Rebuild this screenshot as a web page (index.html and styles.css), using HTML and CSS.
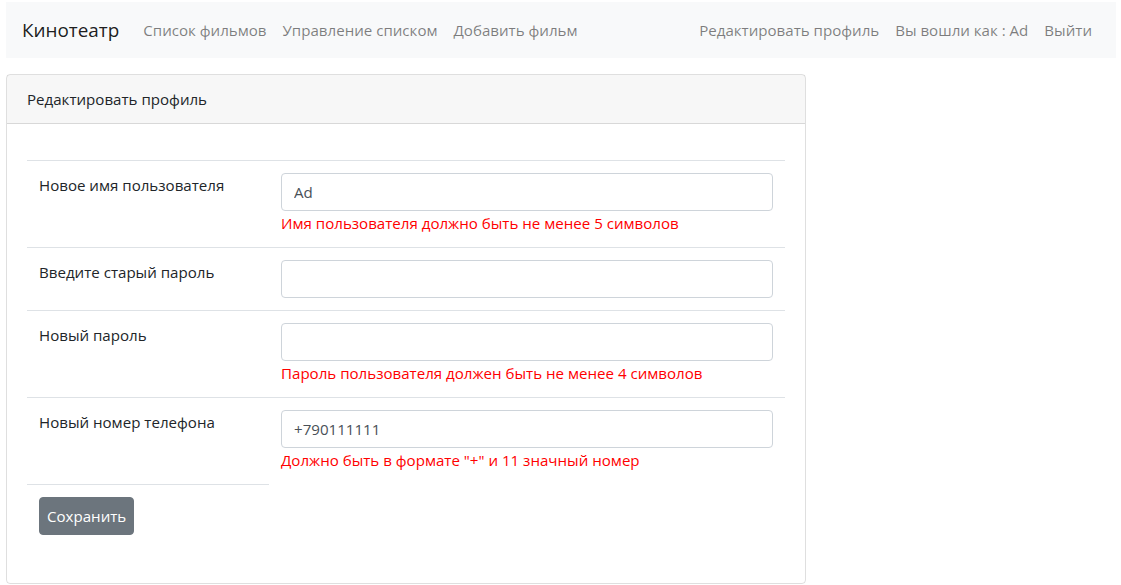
FILE: index.html
```html
<!DOCTYPE html>
<html lang="ru">
<head>
<meta charset="utf-8">
<title>Кинотеатр</title>
<link rel="stylesheet" href="styles.css">
</head>
<body>
<div class="page">
  <nav class="navbar">
    <a class="brand" href="#">Кинотеатр</a>
    <ul class="nav">
      <li><a href="#">Список фильмов</a></li>
      <li><a href="#">Управление списком</a></li>
      <li><a href="#">Добавить фильм</a></li>
    </ul>
    <ul class="nav nav-right">
      <li><a href="#">Редактировать профиль</a></li>
      <li><a href="#">Вы вошли как : Ad</a></li>
      <li><a href="#">Выйти</a></li>
    </ul>
  </nav>

  <div class="card">
    <div class="card-header">Редактировать профиль</div>
    <div class="card-body">
      <table class="table">
        <tr>
          <td class="label">Новое имя пользователя</td>
          <td class="field">
            <input class="input" type="text" value="Ad">
            <div class="error">Имя пользователя должно быть не менее 5 символов</div>
          </td>
        </tr>
        <tr>
          <td class="label">Введите старый пароль</td>
          <td class="field"><input class="input" type="password"></td>
        </tr>
        <tr>
          <td class="label">Новый пароль</td>
          <td class="field">
            <input class="input" type="password">
            <div class="error">Пароль пользователя должен быть не менее 4 символов</div>
          </td>
        </tr>
        <tr>
          <td class="label">Новый номер телефона</td>
          <td class="field">
            <input class="input" type="text" value="+790111111">
            <div class="error">Должно быть в формате "+" и 11 значный номер</div>
          </td>
        </tr>
        <tr>
          <td class="label"><button class="btn" type="button">Сохранить</button></td>
        </tr>
      </table>
    </div>
  </div>
</div>
</body>
</html>
```

FILE: styles.css
```css
* { box-sizing: border-box; }
html, body {
  margin: 0;
  background: #fff;
  font-family: "Open Sans", "Noto Sans", sans-serif;
  font-size: 15.1px;
  line-height: 24px;
  color: #212529;
}
.page {
  padding: 2px 5px 0 6px;
}
.navbar {
  display: flex;
  align-items: center;
  background: #f8f9fa;
  padding: 8px 16px;
  height: 56px;
}
.brand {
  font-size: 18.9px;
  line-height: 30px;
  padding: 5px 0;
  margin-right: 16px;
  color: rgba(0,0,0,.9);
  text-decoration: none;
}
.nav {
  display: flex;
  list-style: none;
  margin: 0;
  padding: 0;
}
.nav a {
  display: block;
  padding: 8px;
  color: rgba(0,0,0,.5);
  text-decoration: none;
}
.nav-right { margin-left: auto; }

.card {
  width: 800px;
  margin-top: 16px;
  border: 1px solid rgba(0,0,0,.125);
  border-radius: 4px;
}
.card-header {
  padding: 12px 20px;
  background: rgba(0,0,0,.03);
  border-bottom: 1px solid rgba(0,0,0,.125);
}
.card-body {
  padding: 36px 20px 20px;
}
.table {
  width: 100%;
  border-collapse: collapse;
  margin-bottom: 16px;
}
.table td {
  border-top: 1px solid #dee2e6;
  padding: 12px;
  vertical-align: top;
}
.table td.label { width: 242px; }
.input {
  display: block;
  width: 100%;
  height: 38px;
  padding: 6px 12px;
  font: inherit;
  color: #495057;
  background: #fff;
  border: 1px solid #ced4da;
  border-radius: 4px;
}
.error {
  color: #ff0000;
}
.btn {
  display: inline-block;
  font: inherit;
  color: #fff;
  background: #6c757d;
  border: 1px solid #6c757d;
  border-radius: 4px;
  padding: 6px 7px;
  line-height: 24px;
}
```
